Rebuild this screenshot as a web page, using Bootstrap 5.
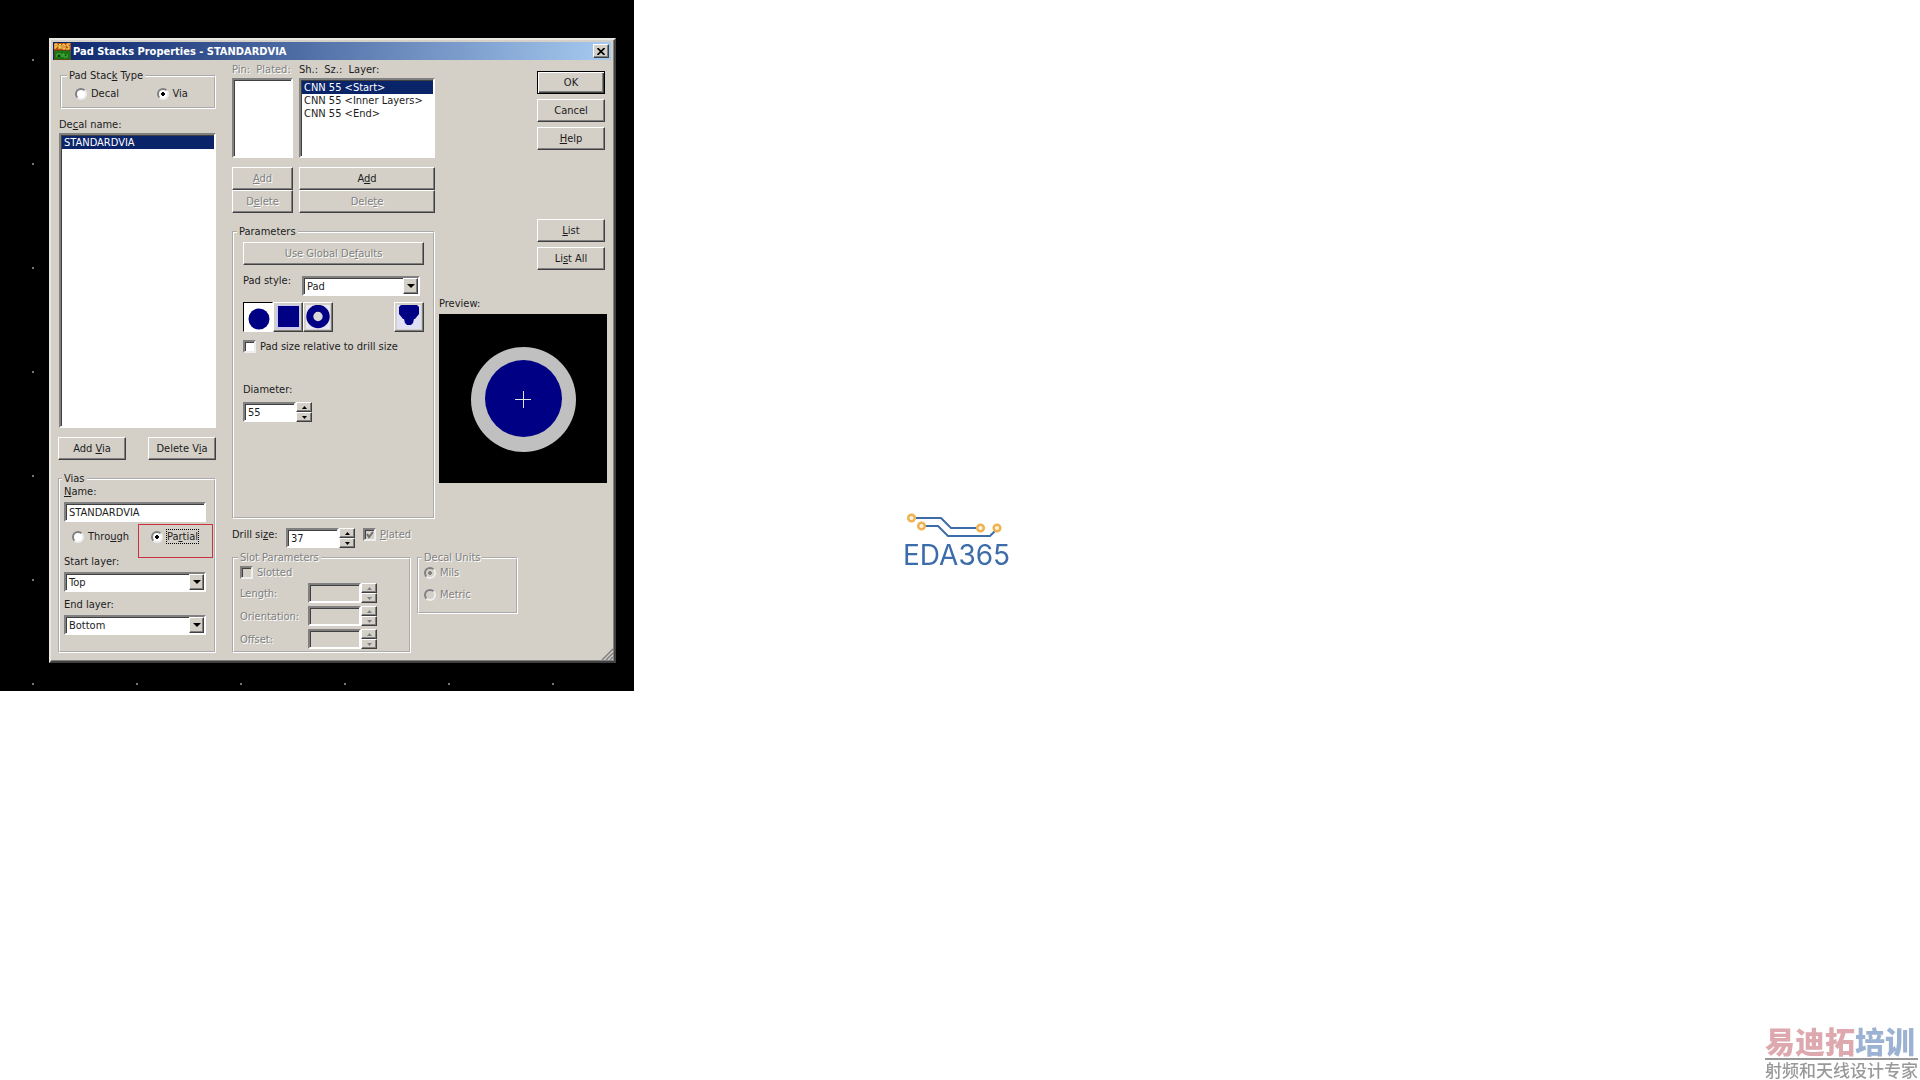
<!DOCTYPE html>
<html lang="en">
<head>
<meta charset="utf-8">
<meta name="viewport" content="width=device-width, initial-scale=1">
<title>Pad Stacks Properties - STANDARDVIA</title>
<link href="https://cdn.jsdelivr.net/npm/bootstrap@5.3.0/dist/css/bootstrap.min.css" rel="stylesheet">
<style>
:root { --face: #d4d0c8; --navy: #0a246a; --pad: #000084; --dark: #404040; --mid: #808080; --ink: #1c1c1c; }
body { background: #fff; }
.workspace {
  padding: 38px 18px 28px 49px;
  background: radial-gradient(circle at 33px 60px, #777 0 1px, transparent 1px) 0 0 / 104px 104px #000;
}
.dlg {
  font: 11px/13px "DejaVu Sans Condensed", "DejaVu Sans", sans-serif; font-stretch: condensed;
  color: var(--ink); background: var(--face); padding: 2px 3px 2px 2px;
  border: 2px solid; border-color: #e8e6e0 var(--dark) var(--dark) #e8e6e0;
  box-shadow: inset -1px -1px var(--mid);
}
.dlg button, .dlg input, .dlg select { font: inherit; font-stretch: inherit; color: inherit; }
.dlg-title { height: 18px; background: linear-gradient(90deg, var(--navy), #a6caf0); color: #fff; font-weight: bold; padding: 0 2px 0 1px; }
.title-text { padding-left: 2px; }
.dlg-body { padding: 0 4px 6px 5px; }
.w-btn {
  background: var(--face); border: 1px solid; border-color: #fff var(--dark) var(--dark) #fff;
  box-shadow: inset -1px -1px var(--mid); border-radius: 0; padding: 0; width: 68px; height: 23px;
}
.w-btn.default-btn { border-color: #000; box-shadow: inset 1px 1px #fff, inset -1px -1px var(--dark), inset -2px -2px var(--mid); }
.dlg .w-btn:disabled, .off { color: var(--mid); text-shadow: 1px 1px #fff; opacity: 1; }
.dlg .close-btn { width: 16px; height: 14px; }
.field {
  background: #fff; border: 2px solid; border-color: var(--mid) #fff #fff var(--mid);
  box-shadow: inset 1px 1px var(--dark); border-radius: 0; padding: 0 3px; height: 20px; outline: 0; appearance: none;
}
.field:disabled { background: var(--face); opacity: 1; }
.list-field { padding: 1px 0 0 1px; overflow: hidden; scrollbar-width: none; display: block; width: 100%; }
.list-field option { padding: 0 2px; min-height: 13px; line-height: 13px; }
.list-field option:checked { background: var(--navy) linear-gradient(var(--navy), var(--navy)); color: #fff; -webkit-text-fill-color: #fff; }
.tall-list { height: 295px; }
.short-list { height: 80px; }
.grp { border: 2px groove #fff; min-width: 0; }
.grp > legend { float: none; width: auto; font-size: 11px; line-height: 13px; margin: 0 0 0 -2px; padding: 0 2px; }
.grp.type-grp > legend { margin-left: -8px; }
.grp.param-grp > legend { margin-left: -6px; }
.tick, .dot {
  appearance: none; flex: none; width: 12px; height: 12px; margin: 0; background: #fff;
  border: 2px solid; border-color: var(--mid) #eee #eee var(--mid);
}
.tick { box-shadow: inset 1px 1px var(--dark); width: 13px; height: 13px; }
.dot { border-radius: 50%; }
.dot:checked { background: radial-gradient(circle, #000 0 2px, #fff 2px); }
.dot:disabled, .tick:disabled { background-color: var(--face); }
.dot:checked:disabled { background: radial-gradient(circle, var(--mid) 0 2px, var(--face) 2px); }
.tick-wrap { position: relative; display: flex; }
.tick-wrap svg { position: absolute; left: 3px; top: 3px; pointer-events: none; }
.combo { position: relative; display: block; }
.combo .field { width: 100%; display: block; }
.combo::before {
  content: ""; position: absolute; right: 2px; top: 2px; width: 15px; height: 16px; background: var(--face);
  border: 1px solid; border-color: #fff var(--dark) var(--dark) #fff; box-shadow: inset -1px -1px var(--mid); pointer-events: none;
}
.combo::after {
  content: ""; position: absolute; right: 5px; top: 8px; border: 4px solid transparent; border-top-color: #000; border-bottom: 0; pointer-events: none;
}
.style-combo { width: 118px; }
.num { width: 53px; }
.num::-webkit-inner-spin-button { appearance: none; }
.spin .w-btn { width: 16px; height: 10px; display: flex; align-items: center; justify-content: center; }
.left-col { width: 158px; padding-top: 9px; }
.type-grp { margin-left: 2px; padding: 5px 8px 7px 13px; }
.decal-block { padding-left: 1px; }
.via-grp { padding: 0 8px 16px 4px; }
.marker { position: absolute; left: -13px; top: -6px; width: 75px; height: 34px; border: 1px solid #c8323c; pointer-events: none; }
.focus-text { outline: 1px dotted #000; }
.right-area { margin-left: 16px; width: 375px; }
.mid-col { width: 203px; padding-top: 3px; }
.side-col { width: 168px; padding-top: 11px; }
.cmds { gap: 5px; padding-right: 2px; }
.mt-list { margin-top: 64px; }
.pin-col { width: 61px; }
.layer-col { width: 136px; }
.param-grp { padding: 4px 9px 0 9px; height: 294px; }
.tool { width: 30px; height: 30px; display: flex; align-items: center; justify-content: center; }
.tool.down { background: #fff; border-color: #000 #fff #fff #000; box-shadow: none; padding: 3px 0 0 2px; }
.preview { margin-top: 27px; }
.preview svg { display: block; width: 100%; height: auto; }
.drill-label { width: 54px; white-space: nowrap; }
.lower-row { margin-top: 3px; gap: 6px; }
.slot-grp { width: 179px; padding: 2px 32px 2px 6px; }
.slot-rows { gap: 3px; }
.unit-grp { width: 101px; padding: 2px 5px 11px 5px; }
.grip { position: absolute; right: 1px; bottom: 1px; }
.mt-2p { margin-top: 2px; } .mt-4p { margin-top: 4px; } .mt-6p { margin-top: 6px; } .mt-9p { margin-top: 9px; } .mt-12p { margin-top: 12px; } .mt-30p { margin-top: 30px; }
.logo-mark { width: 114px; color: #3d6cab; font: 28px/28px Inter, sans-serif; }
.stamp { right: 2px; font-family: "Noto Sans CJK SC", sans-serif; color: #999; }
.stamp-main { font-size: 30px; line-height: 32px; font-weight: 900; color: #dda9ae; padding-bottom: 2px; }
.stamp-main span { color: #9bb2d2; }
.stamp-sub { font-size: 17px; line-height: 20px; border-top: 2px solid #999; font-weight: 500; }
</style>
<script src="https://cdn.jsdelivr.net/npm/bootstrap@5.3.0/dist/js/bootstrap.bundle.min.js"></script>
</head>
<body>
<main class="d-flex align-items-start">
  <div class="workspace">
    <section class="dlg position-relative" aria-label="Pad Stacks Properties">
      <header class="dlg-title d-flex align-items-center">
        <svg width="17" height="17" viewBox="0 0 17 17" aria-hidden="true">
          <rect width="17" height="17" fill="#5a4a10"/><rect width="17" height="7" fill="#b85018"/>
          <path d="M1 6V1h2v3H1M5 6V2l1-1 1 1v4M5 4h2M9 1v5h2V2L9 1M16 1h-3v2h2v3h-3" fill="none" stroke="#ffe860"/>
          <rect x="1" y="8" width="15" height="8" fill="#187818"/><path d="M3 14v-3h4v3M9 14v-3h1v3h3v-3" stroke="#50c040" fill="#083808"/>
        </svg>
        <span class="flex-grow-1 title-text">Pad Stacks Properties - STANDARDVIA</span>
        <button class="w-btn close-btn d-flex align-items-center justify-content-center" type="button" aria-label="Close">
          <svg width="8" height="7" viewBox="0 0 8 7"><path d="M0.5 0L7.5 7M7.5 0L0.5 7" stroke="#000" stroke-width="1.6"/></svg>
        </button>
      </header>
      <form class="dlg-body d-flex">
        <div class="left-col">
          <fieldset class="grp type-grp">
            <legend>Pad Stac<u>k</u> Type</legend>
            <div class="d-flex">
              <label class="d-flex align-items-center gap-1 w-50"><input class="dot" type="radio" name="kind">Decal</label>
              <label class="d-flex align-items-center gap-1 ms-3"><input class="dot" type="radio" name="kind" checked>Via</label>
            </div>
          </fieldset>
          <div class="decal-block mt-9p">
            <label class="d-block" for="decals">De<u>c</u>al name:</label>
            <select class="field list-field tall-list mt-2p" id="decals" size="20"><option selected>STANDARDVIA</option></select>
          </div>
          <div class="d-flex justify-content-between mt-9p">
            <button class="w-btn" type="button">Add <u>V</u>ia</button>
            <button class="w-btn" type="button">Delete V<u>i</u>a</button>
          </div>
          <fieldset class="grp via-grp mt-12p">
            <legend>Vias</legend>
            <label class="d-block" for="vname"><u>N</u>ame:</label>
            <input class="field w-100 d-block mt-4p" id="vname" type="text" value="STANDARDVIA">
            <div class="d-flex mt-2 ps-2">
              <label class="d-flex align-items-center gap-1"><input class="dot" type="radio" name="span"><span>Thro<u>u</u>gh</span></label>
              <label class="d-flex align-items-center gap-1 position-relative ms-auto me-2"><input class="dot" type="radio" name="span" checked><span class="focus-text">Pa<u>r</u>tial</span><span class="marker"></span></label>
            </div>
            <label class="d-block mt-12p" for="startl">Start layer:</label>
            <span class="combo mt-4p"><select class="field" id="startl"><option>Top</option></select></span>
            <label class="d-block mt-6p" for="endl">End layer:</label>
            <span class="combo mt-4p"><select class="field" id="endl"><option>Bottom</option></select></span>
          </fieldset>
        </div>
        <div class="right-area">
          <div class="d-flex justify-content-between">
            <div class="mid-col">
              <div class="d-flex justify-content-between">
                <div class="pin-col">
                  <label class="off d-block text-nowrap" for="pins">Pin:&nbsp; Plated:</label>
                  <select class="field list-field short-list mt-2p" id="pins" size="6"></select>
                  <button class="w-btn w-100 d-block mt-9p" type="button" disabled><u>A</u>dd</button>
                  <button class="w-btn w-100 d-block" type="button" disabled>D<u>e</u>lete</button>
                </div>
                <div class="layer-col">
                  <label class="d-block" for="layers">Sh.:&nbsp; Sz.:&nbsp; Layer:</label>
                  <select class="field list-field short-list mt-2p" id="layers" size="6">
                    <option selected>CNN 55 &lt;Start&gt;</option><option>CNN 55 &lt;Inner Layers&gt;</option><option>CNN 55 &lt;End&gt;</option>
                  </select>
                  <button class="w-btn w-100 d-block mt-9p" type="button">A<u>d</u>d</button>
                  <button class="w-btn w-100 d-block" type="button" disabled>Dele<u>t</u>e</button>
                </div>
              </div>
              <fieldset class="grp param-grp mt-12p">
                <legend>Parameters</legend>
                <button class="w-btn w-100 d-block" type="button" disabled>Use Global De<u>f</u>aults</button>
                <div class="d-flex justify-content-between mt-9p pe-1">
                  <label for="pstyle">Pad style:</label>
                  <span class="combo style-combo mt-2p"><select class="field" id="pstyle"><option>Pad</option></select></span>
                </div>
                <div class="d-flex mt-6p">
                  <button class="w-btn tool down" type="button" aria-label="Round"><svg width="22" height="22"><circle cx="11" cy="11" r="10.5" fill="#000084"/></svg></button>
                  <button class="w-btn tool" type="button" aria-label="Square"><svg width="24" height="24"><rect width="24" height="24" fill="#c8c8f0"/><rect x="2" y="1" width="21" height="21" fill="#000084"/></svg></button>
                  <button class="w-btn tool" type="button" aria-label="Annular"><svg width="24" height="24"><rect width="24" height="24" fill="#e8e8f4"/><circle cx="12" cy="11.5" r="8.2" fill="#d8d8d8" stroke="#000084" stroke-width="7"/></svg></button>
                  <button class="w-btn tool ms-auto" type="button" aria-label="Odd"><svg width="24" height="24"><rect width="24" height="24" fill="#e0e0f4"/><path d="M4 0H20L22 2V9L18 14H17L16 18L14 20H10L8 18L7 14H6L2 9V2Z" fill="#000084"/></svg></button>
                </div>
                <label class="d-flex align-items-center gap-1 mt-2"><input class="tick" type="checkbox">Pad size relative to drill size</label>
                <label class="d-block mt-30p" for="dia">Diameter:</label>
                <div class="d-flex mt-6p spin">
                  <input class="field num" id="dia" type="number" value="55">
                  <div><button class="w-btn" type="button" aria-label="Up"><svg width="5" height="3"><path d="M0 3L2.5 0L5 3Z"/></svg></button><button class="w-btn" type="button" aria-label="Down"><svg width="5" height="3"><path d="M0 0L2.5 3L5 0Z"/></svg></button></div>
                </div>
              </fieldset>
            </div>
            <div class="side-col">
              <div class="cmds d-flex flex-column align-items-end">
                <button class="w-btn default-btn" type="button">OK</button>
                <button class="w-btn" type="button">Cancel</button>
                <button class="w-btn" type="button"><u>H</u>elp</button>
                <button class="w-btn mt-list" type="button"><u>L</u>ist</button>
                <button class="w-btn" type="button">Li<u>s</u>t All</button>
              </div>
              <div class="preview">
                <div>Preview:</div>
                <svg class="mt-4p" viewBox="0 0 168 169" role="img" aria-label="Pad preview"><rect width="168" height="169" fill="#000"/><circle cx="84.5" cy="85.5" r="52.5" fill="#c0c0c0"/><circle cx="84.5" cy="84.5" r="38.5" fill="#000084"/><path d="M76 85.5H92M84.5 77V94" stroke="#e0e0e0"/></svg>
              </div>
            </div>
          </div>
          <div class="d-flex mt-9p spin">
            <label class="drill-label" for="drill">Drill si<u>z</u>e:</label>
            <input class="field num" id="drill" type="number" value="37">
            <div><button class="w-btn" type="button" aria-label="Up"><svg width="5" height="3"><path d="M0 3L2.5 0L5 3Z"/></svg></button><button class="w-btn" type="button" aria-label="Down"><svg width="5" height="3"><path d="M0 0L2.5 3L5 0Z"/></svg></button></div>
            <label class="off d-flex align-items-start gap-1 ms-2"><span class="tick-wrap"><input class="tick" type="checkbox" checked disabled><svg width="8" height="8"><path d="M1 3L3 6L7 1" fill="none" stroke="#707070" stroke-width="2"/></svg></span><span><u>P</u>lated</span></label>
          </div>
          <div class="d-flex align-items-start lower-row">
            <fieldset class="grp slot-grp off" disabled>
              <legend>Slot Parameters</legend>
              <label class="d-flex align-items-center gap-1"><input class="tick" type="checkbox" disabled>Slotted</label>
              <div class="d-flex flex-column slot-rows mt-4p">
                <div class="d-flex align-items-center spin"><label class="flex-grow-1" for="len">Length:</label><input class="field num" id="len" type="number" disabled><div><button class="w-btn" type="button" disabled aria-label="Up"><svg width="5" height="3"><path fill="#808080" d="M0 3L2.5 0L5 3Z"/></svg></button><button class="w-btn" type="button" disabled aria-label="Down"><svg width="5" height="3"><path fill="#808080" d="M0 0L2.5 3L5 0Z"/></svg></button></div></div>
                <div class="d-flex align-items-center spin"><label class="flex-grow-1" for="ori">Orientation:</label><input class="field num" id="ori" type="number" disabled><div><button class="w-btn" type="button" disabled aria-label="Up"><svg width="5" height="3"><path fill="#808080" d="M0 3L2.5 0L5 3Z"/></svg></button><button class="w-btn" type="button" disabled aria-label="Down"><svg width="5" height="3"><path fill="#808080" d="M0 0L2.5 3L5 0Z"/></svg></button></div></div>
                <div class="d-flex align-items-center spin"><label class="flex-grow-1" for="off">Offset:</label><input class="field num" id="off" type="number" disabled><div><button class="w-btn" type="button" disabled aria-label="Up"><svg width="5" height="3"><path fill="#808080" d="M0 3L2.5 0L5 3Z"/></svg></button><button class="w-btn" type="button" disabled aria-label="Down"><svg width="5" height="3"><path fill="#808080" d="M0 0L2.5 3L5 0Z"/></svg></button></div></div>
              </div>
            </fieldset>
            <fieldset class="grp unit-grp off" disabled>
              <legend>Decal Units</legend>
              <label class="d-flex align-items-center gap-1"><input class="dot" type="radio" name="unit" checked disabled>Mils</label>
              <label class="d-flex align-items-center gap-1 mt-9p"><input class="dot" type="radio" name="unit" disabled>Metric</label>
            </fieldset>
          </div>
        </div>
      </form>
      <svg class="grip" width="12" height="12" aria-hidden="true"><path d="M1 12L12 1M5 12L12 5M9 12L12 9" stroke="#808080" stroke-width="1.5"/></svg>
    </section>
  </div>
</main>
<div class="logo-mark position-fixed top-50 start-50 translate-middle">
  <svg class="d-block" width="104" height="30" viewBox="0 0 104 30" aria-hidden="true">
    <path d="M13 7H38L48 17H73M22 15H35L45 25H87L92 20" fill="none" stroke="#3d6cab" stroke-width="2"/>
    <g fill="#fff3dc" stroke="#efb252" stroke-width="2.5"><circle cx="8.5" cy="7" r="3.3"/><circle cx="18.5" cy="15" r="3.3"/><circle cx="77.5" cy="17" r="3.3"/><circle cx="94" cy="17" r="3.3"/></g>
  </svg>
  <span class="d-block">EDA365</span>
</div>
<div class="stamp position-fixed bottom-0 text-nowrap" lang="zh-CN">
  <div class="stamp-main">易迪拓<span>培训</span></div>
  <div class="stamp-sub">射频和天线设计专家</div>
</div>
</body>
</html>
